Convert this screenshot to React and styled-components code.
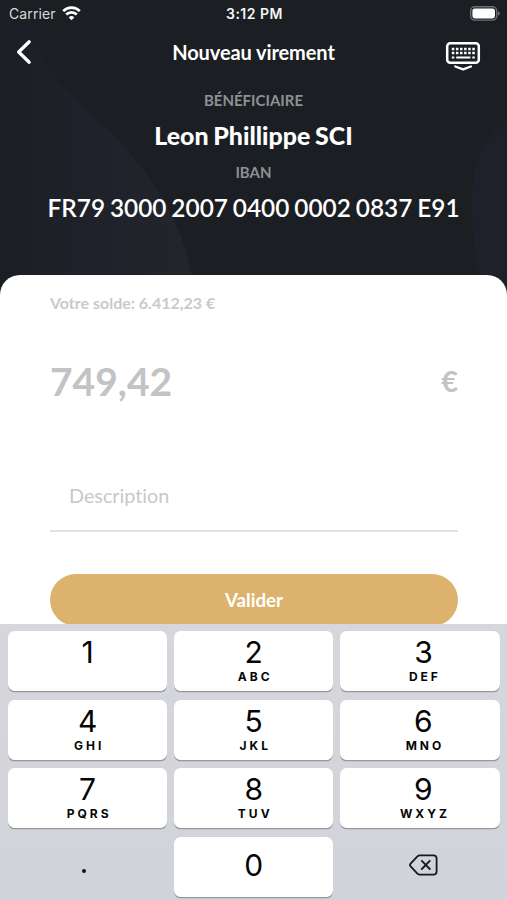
import React from 'react';
import styled, { createGlobalStyle } from 'styled-components';

const GlobalStyle = createGlobalStyle`
    * {
        box-sizing: border-box;
    }

    body {
        margin: 0;
        background: #ffffff;
    }
`;

const Screen = styled.div`
    width: 507px;
    height: 900px;
    display: flex;
    flex-direction: column;
    overflow: hidden;
    background: #1b1e22;
    font-family: Lato, 'Liberation Sans', sans-serif;
    font-variant-ligatures: none;
`;

const Header = styled.header`
    position: relative;
    height: 274.5px;
    flex: none;
    color: #ffffff;
`;

const Backdrop = styled.svg`
    position: absolute;
    top: 0;
    left: 0;
`;

const HeaderContent = styled.div`
    position: relative;
    display: flex;
    flex-direction: column;
`;

const StatusBar = styled.div`
    height: 28px;
    display: grid;
    grid-template-columns: 1fr auto 1fr;
    align-items: center;
    padding: 0 7px 1px 9px;
    font-family: Inter, 'Liberation Sans', sans-serif;
    font-size: 14px;
    color: #f4f5f5;
`;

const Carrier = styled.div`
    display: flex;
    align-items: center;
    gap: 6px;
    color: #d9dadb;
    letter-spacing: 0.1px;
`;

const Clock = styled.div`
    font-weight: 600;
    letter-spacing: 0.5px;
`;

const Battery = styled.svg`
    justify-self: end;
`;

const NavBar = styled.div`
    height: 50px;
    display: grid;
    grid-template-columns: 60px 1fr 60px;
    align-items: center;
    justify-items: center;
`;

const NavButton = styled.button`
    display: flex;
    padding: 0;
    border: 0;
    background: none;
    color: #ffffff;
    margin: ${({ $margin }) => $margin || 0};
`;

const Title = styled.h1`
    margin: 0 0 2px;
    font-size: 20px;
    line-height: 24px;
    font-weight: 700;
    letter-spacing: -0.1px;
`;

const Label = styled.div`
    height: 20px;
    margin-top: ${({ $top }) => $top}px;
    text-align: center;
    font-size: 15px;
    line-height: 20px;
    font-weight: 700;
    color: #8e9093;
`;

const Value = styled.div`
    height: 30px;
    margin-top: ${({ $top }) => $top}px;
    text-align: center;
    white-space: nowrap;
    font-size: ${({ $size }) => $size}px;
    line-height: 30px;
    font-weight: ${({ $weight }) => $weight};
    word-spacing: -1.2px;
`;

const Sheet = styled.main`
    position: relative;
    height: 349.5px;
    flex: none;
    display: flex;
    flex-direction: column;
    overflow: hidden;
    padding: 18.5px 49px 0 50px;
    border-radius: 20px 20px 0 0;
    background: #ffffff;
`;

const Balance = styled.div`
    height: 20px;
    font-size: 16px;
    line-height: 20px;
    font-weight: 700;
    color: #c9cacc;
`;

const AmountRow = styled.div`
    height: 50px;
    margin-top: 42.5px;
    display: flex;
    align-items: center;
    justify-content: space-between;
    color: #c2c3c4;
    font-weight: 700;
`;

const Amount = styled.span`
    font-size: 39px;
    line-height: 50px;
`;

const Currency = styled.span`
    font-size: 29px;
    line-height: 50px;
`;

const Description = styled.div`
    height: 70px;
    margin-top: 56px;
    flex: none;
    padding: 20.5px 19px 0;
    border-bottom: 2px solid #e0e1e2;
    font-size: 19.8px;
    line-height: 26px;
    color: #c6c8cc;
`;

const Submit = styled.button`
    height: 52px;
    margin-top: 42.5px;
    flex: none;
    padding: 0;
    border: 0;
    border-radius: 26px;
    background: #ddb26d;
    color: #ffffff;
    font-family: inherit;
    font-size: 18.7px;
    font-weight: 700;
`;

const Keypad = styled.div`
    flex: 1;
    display: grid;
    grid-template-columns: repeat(3, 1fr);
    grid-auto-rows: 60px;
    gap: 8.5px 7px;
    padding: 7px 7.5px 0 8px;
    background: linear-gradient(#d6d7dd, #d0d3d9);
    font-family: Inter, 'Liberation Sans', sans-serif;
    color: #050505;
`;

const Key = styled.button`
    display: flex;
    flex-direction: column;
    align-items: center;
    justify-content: ${({ $center }) => ($center ? 'center' : 'flex-start')};
    padding: ${({ $center }) => ($center ? '0 0 3px' : '3px 0 0')};
    border: 0;
    border-radius: 6.5px;
    background: ${({ $flat }) => ($flat ? 'none' : '#ffffff')};
    box-shadow: ${({ $flat }) => ($flat ? 'none' : '0 1.3px 0 #96989d')};
    font-family: inherit;
    color: inherit;

    &:nth-child(3n) {
        padding-left: 7px;
    }
`;

const Digit = styled.span`
    font-size: 30px;
    line-height: 36px;
    font-weight: 400;
`;

const Letters = styled.span`
    font-size: 12px;
    line-height: 14px;
    font-weight: 700;
    letter-spacing: 3px;
    margin-right: -3px;
`;

const Dot = styled.span`
    width: 4px;
    height: 4px;
    margin: 11px 7px 0 0;
    border-radius: 50%;
    background: #111214;
`;

const keys = [
  ['1', ''],
  ['2', 'ABC'],
  ['3', 'DEF'],
  ['4', 'GHI'],
  ['5', 'JKL'],
  ['6', 'MNO'],
  ['7', 'PQRS'],
  ['8', 'TUV'],
  ['9', 'WXYZ'],
];

const WifiIcon = () => (
  <svg width="19" height="15" viewBox="0 0 19 15" fill="none" stroke="#ffffff" strokeWidth="2.7">
    <path d="M1.2 5.1a11.8 11.8 0 0 1 16.6 0" />
    <path d="M4.2 8.5a7.5 7.5 0 0 1 10.6 0" />
    <path d="M6.7 11.4a4 4 0 0 1 5.6 0l-2.8 2.9z" fill="#ffffff" stroke="none" />
  </svg>
);

const BatteryIcon = () => (
  <Battery width="30" height="15" viewBox="0 0 30 15">
    <rect x="0.7" y="0.7" width="26" height="13.4" rx="4" fill="none" stroke="#6c6e71" strokeWidth="1.4" />
    <rect x="2.4" y="2.4" width="22.6" height="10" rx="2.4" fill="#ffffff" />
    <path d="M28 5.2c2.3.8 2.3 3.6 0 4.4z" fill="#77797b" />
  </Battery>
);

const BackIcon = () => (
  <svg width="16" height="26" viewBox="0 0 16 26" fill="none" stroke="currentColor" strokeWidth="3.3" strokeLinecap="round" strokeLinejoin="round">
    <path d="M13.2 2.8 2.7 13l10.5 10.2" />
  </svg>
);

const KeyboardIcon = () => (
  <svg width="36" height="30" viewBox="0 0 36 30" fill="none" stroke="currentColor">
    <rect x="2.2" y="2.2" width="31.6" height="19.6" rx="3" strokeWidth="2.5" />
    <path d="M6.8 8h23M6.8 12h23" strokeWidth="2.3" strokeDasharray="2.5 1.6" />
    <path d="M6.8 16.5h2.5M11.2 16.5h14.2M27.3 16.5h2.5" strokeWidth="2" />
    <path d="m10.3 25.5 7.8 2.9 7.8-2.9" strokeWidth="2.3" strokeLinecap="round" strokeLinejoin="round" />
  </svg>
);

const DeleteIcon = () => (
  <svg width="30" height="22" viewBox="0 0 30 22" fill="none" stroke="#17191c" strokeWidth="1.8" strokeLinecap="round" strokeLinejoin="round">
    <path d="M12 1.4h13.4a3.2 3.2 0 0 1 3.2 3.2v12.8a3.2 3.2 0 0 1-3.2 3.2H12a4 4 0 0 1-2.6-1L2.4 12.1a1.5 1.5 0 0 1 0-2.2l7-7.5a4 4 0 0 1 2.6-1z" />
    <path d="m13.8 6.8 8 8.2M21.8 6.8l-8 8.2" />
  </svg>
);

const App = () => (
  <>
    <GlobalStyle />
    <Screen>
      <Header>
        <Backdrop width="507" height="300" viewBox="0 0 507 300">
          <defs>
            <linearGradient id="arc" x1="0" y1="0" x2="1" y2="0">
              <stop offset="0" stopColor="#1b1e23" />
              <stop offset="0.5" stopColor="#1f222b" />
              <stop offset="1" stopColor="#222529" />
            </linearGradient>
          </defs>
          <path d="M0 20h30C38 45 45 68 62 86C85 110 107 127 127 150C162 191 190 235 194 300H0z" fill="url(#arc)" />
          <path d="M507 121C491 132 479 149 474 172C469 205 473 248 481 300H507z" fill="#1e2129" />
        </Backdrop>
        <HeaderContent>
          <StatusBar>
            <Carrier>
              Carrier
              <WifiIcon />
            </Carrier>
            <Clock>3:12 PM</Clock>
            <BatteryIcon />
          </StatusBar>
          <NavBar>
            <NavButton aria-label="Retour" $margin="0 13px 2px 0">
              <BackIcon />
            </NavButton>
            <Title>Nouveau virement</Title>
            <NavButton aria-label="Clavier" $margin="5px 28px 0 0">
              <KeyboardIcon />
            </NavButton>
          </NavBar>
          <Label $top={12}>BÉNÉFICIAIRE</Label>
          <Value $top={10} $size={24.9} $weight={900}>Leon Phillippe SCI</Value>
          <Label $top={12}>IBAN</Label>
          <Value $top={11} $size={24.4} $weight={600}>FR79 3000 2007 0400 0002 0837 E91</Value>
        </HeaderContent>
      </Header>
      <Sheet>
        <Balance>Votre solde: 6.412,23 €</Balance>
        <AmountRow>
          <Amount>749,42</Amount>
          <Currency>€</Currency>
        </AmountRow>
        <Description>Description</Description>
        <Submit>Valider</Submit>
      </Sheet>
      <Keypad>
        {keys.map(([digit, letters]) => (
          <Key key={digit}>
            <Digit>{digit}</Digit>
            {letters && <Letters>{letters}</Letters>}
          </Key>
        ))}
        <Key $flat $center aria-label="Point">
          <Dot />
        </Key>
        <Key $center>
          <Digit>0</Digit>
        </Key>
        <Key $flat $center aria-label="Effacer">
          <DeleteIcon />
        </Key>
      </Keypad>
    </Screen>
  </>
);

export default App;
